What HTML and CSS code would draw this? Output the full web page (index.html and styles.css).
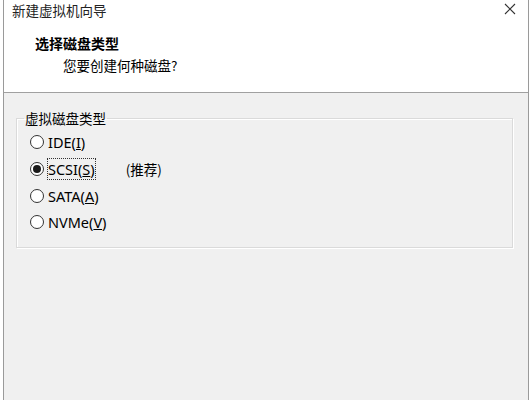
FILE: index.html
```html
<!DOCTYPE html>
<html lang="zh-CN">
<head>
    <meta charset="UTF-8">
    <title>新建虚拟机向导</title>
    <link rel="stylesheet" href="styles.css">
</head>
<body>
    <div class="window">
        <div class="titlebar">
            <span class="title">新建虚拟机向导</span>
            <span class="close">
                <svg width="12" height="12" viewBox="0 0 12 12"><path d="M1 1 L11 11 M11 1 L1 11" stroke="#333" stroke-width="1.1" fill="none"/></svg>
            </span>
        </div>

        <div class="header">
            <h1>选择磁盘类型</h1>
            <p>您要创建何种磁盘?</p>
        </div>

        <div class="content">
            <fieldset class="group">
                <legend>虚拟磁盘类型</legend>
                <label class="option"><span class="radio"></span><span>IDE(<u>I</u>)</span></label>
                <label class="option"><span class="radio checked"></span><span class="focus">SCSI(<u>S</u>)</span><span class="hint">(推荐)</span></label>
                <label class="option"><span class="radio"></span><span>SATA(<u>A</u>)</span></label>
                <label class="option"><span class="radio"></span><span>NVMe(<u>V</u>)</span></label>
            </fieldset>
        </div>
    </div>
</body>
</html>
```

FILE: styles.css
```css
html, body {
    margin: 0;
    padding: 0;
    height: 100%;
    background-color: #fff;
}

body {
    font-family: "Noto Sans", "Noto Sans CJK SC", sans-serif;
    font-size: 14.5px;
    color: #000;
    overflow: hidden;
}

.window {
    margin: 0 1px 0 3px;
    height: 100%;
    border-left: 1px solid #9a9a9a;
    border-right: 1px solid #9a9a9a;
    background-color: #f0f0f0;
    display: flex;
    flex-direction: column;
}

.titlebar {
    height: 20px;
    background-color: #fff;
    display: flex;
    align-items: center;
    justify-content: space-between;
    padding: 0 12px 0 8px;
}

.title {
    font-family: "Noto Sans CJK SC", sans-serif;
    font-size: 13.5px;
    color: #222;
    margin-top: -1px;
}

.close {
    display: flex;
    margin-top: -2px;
}

.header {
    height: 73px;
    background-color: #fff;
    border-bottom: 1px solid #a0a0a0;
    box-sizing: border-box;
}

.header h1 {
    margin: 14px 0 0 31px;
    font-family: "Noto Sans CJK SC", sans-serif;
    font-size: 14px;
    font-weight: bold;
    line-height: 18px;
}

.header p {
    margin: 4px 0 0 59px;
    font-family: "Noto Sans CJK SC", sans-serif;
    font-size: 13.5px;
    line-height: 18px;
}

.content {
    padding: 16px 15px 0 12px;
}

.group {
    margin: 0;
    padding: 2px 0 8px 13px;
    height: 139px;
    box-sizing: border-box;
    border: 1px solid #dadada;
    box-shadow: inset 1px 1px 0 #fff, 1px 1px 0 #fff;
}

.group legend {
    font-family: "Noto Sans CJK SC", sans-serif;
    font-size: 13.5px;
    padding: 0 1px;
    margin-left: -6px;
    line-height: 18px;
}

.option {
    display: flex;
    align-items: center;
    height: 26.7px;
}

.radio {
    width: 14px;
    height: 14px;
    box-sizing: border-box;
    border: 1px solid #333;
    border-radius: 50%;
    background-color: #fff;
    margin-right: 4px;
    display: flex;
    align-items: center;
    justify-content: center;
}

.radio.checked::after {
    content: "";
    width: 8px;
    height: 8px;
    border-radius: 50%;
    background-color: #1a1a1a;
}

.focus {
    outline: 1px dotted #333;
    outline-offset: 0;
}

.hint {
    margin-left: 31px;
    font-family: "Noto Sans CJK SC", sans-serif;
    font-size: 13.5px;
}
```
